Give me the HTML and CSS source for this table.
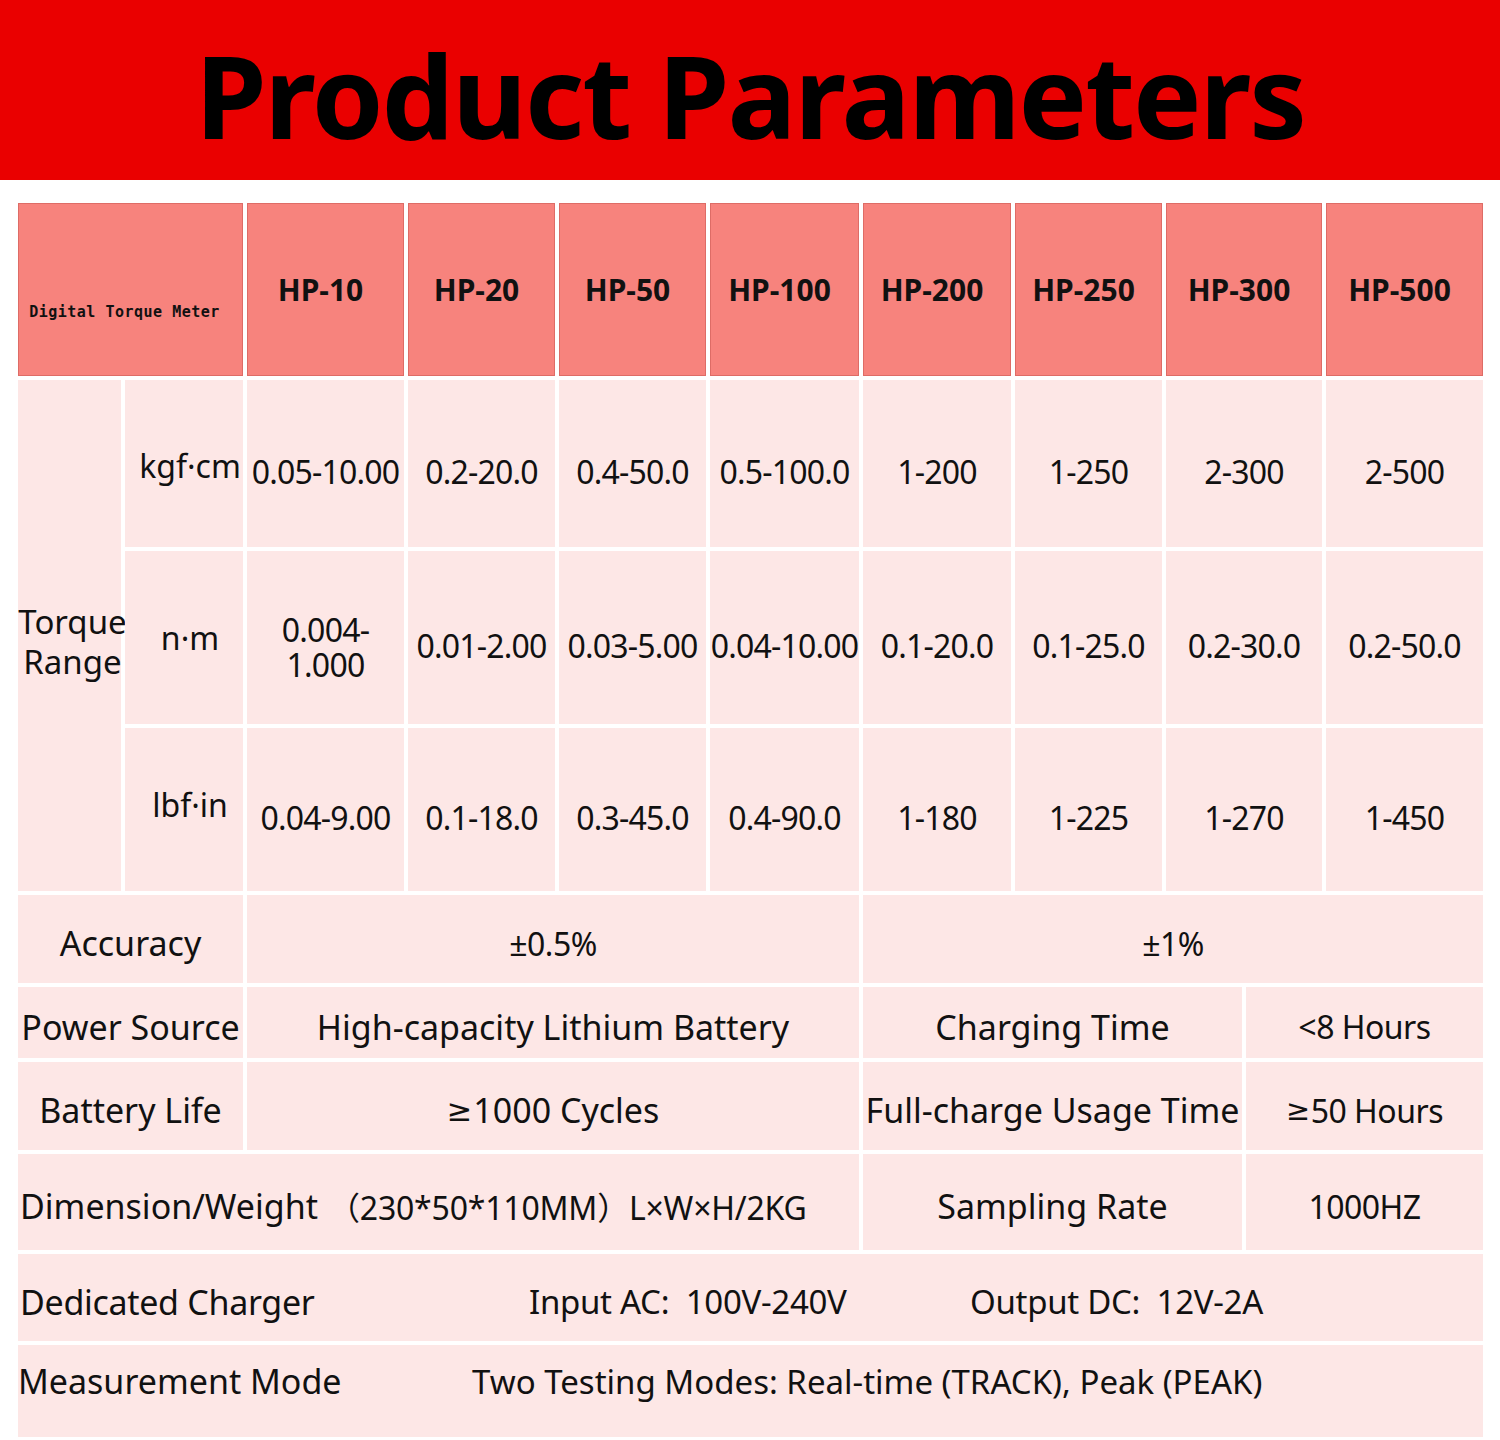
FILE: index.html
```html
<!DOCTYPE html>
<html lang="en">
<head>
<meta charset="utf-8">
<title>Product Parameters</title>
<link rel="stylesheet" href="styles.css">
</head>
<body>
<header class="banner"><h1 class="title">Product Parameters</h1></header>

<main class="sheet">
  <section class="models">
    <div class="cell head head-label"><span class="mono">Digital Torque Meter</span></div>
    <div class="cell head">HP-10</div>
    <div class="cell head">HP-20</div>
    <div class="cell head">HP-50</div>
    <div class="cell head">HP-100</div>
    <div class="cell head">HP-200</div>
    <div class="cell head">HP-250</div>
    <div class="cell head">HP-300</div>
    <div class="cell head">HP-500</div>

    <div class="cell label range"><span class="range-text">Torque<br>Range</span></div>
    <div class="cell unit unit-kgf">kgf·cm</div>
    <div class="cell num">0.05-10.00</div>
    <div class="cell num">0.2-20.0</div>
    <div class="cell num">0.4-50.0</div>
    <div class="cell num">0.5-100.0</div>
    <div class="cell num">1-200</div>
    <div class="cell num">1-250</div>
    <div class="cell num">2-300</div>
    <div class="cell num">2-500</div>

    <div class="cell unit">n·m</div>
    <div class="cell num two-line"><span class="stack">0.004-<br>1.000</span></div>
    <div class="cell num">0.01-2.00</div>
    <div class="cell num">0.03-5.00</div>
    <div class="cell num">0.04-10.00</div>
    <div class="cell num">0.1-20.0</div>
    <div class="cell num">0.1-25.0</div>
    <div class="cell num">0.2-30.0</div>
    <div class="cell num">0.2-50.0</div>

    <div class="cell unit unit-lbf">lbf·in</div>
    <div class="cell num">0.04-9.00</div>
    <div class="cell num">0.1-18.0</div>
    <div class="cell num">0.3-45.0</div>
    <div class="cell num">0.4-90.0</div>
    <div class="cell num">1-180</div>
    <div class="cell num">1-225</div>
    <div class="cell num">1-270</div>
    <div class="cell num">1-450</div>
  </section>

  <section class="row row-acc">
    <div class="cell label">Accuracy</div>
    <div class="cell val val-num">±0.5%</div>
    <div class="cell val val-num">±1%</div>
  </section>

  <section class="row row-four row-power">
    <div class="cell label">Power Source</div>
    <div class="cell val">High-capacity Lithium Battery</div>
    <div class="cell val">Charging Time</div>
    <div class="cell val val-short">&lt;8 Hours</div>
  </section>

  <section class="row row-four row-life">
    <div class="cell label">Battery Life</div>
    <div class="cell val"><span class="sym">≥</span>1000 Cycles</div>
    <div class="cell val">Full-charge Usage Time</div>
    <div class="cell val val-short"><span class="sym">≥</span>50 Hours</div>
  </section>

  <section class="row row-dim">
    <div class="cell wide dim">
      <span class="wide-label">Dimension/Weight</span>
      <span class="wide-val">（230*50*110MM）L×W×H/2KG</span>
    </div>
    <div class="cell val">Sampling Rate</div>
    <div class="cell val val-short">1000HZ</div>
  </section>

  <section class="row row-full row-charger">
    <div class="cell wide charger">
      <span class="wide-label">Dedicated Charger</span>
      <span>Input AC:&nbsp; 100V-240V</span>
      <span>Output DC:&nbsp; 12V-2A</span>
    </div>
  </section>

  <section class="row row-full row-mode">
    <div class="cell wide mode">
      <span class="wide-label">Measurement Mode</span>
      <span>Two Testing Modes: Real-time (TRACK), Peak (PEAK)</span>
    </div>
  </section>
</main>
</body>
</html>
```

FILE: styles.css
```css
* { box-sizing: border-box; }

html, body {
  margin: 0;
  padding: 0;
  background: #ffffff;
}

body {
  width: 1500px;
  font-family: "Noto Sans", "Noto Sans CJK SC", sans-serif;
  color: #111111;
}

.banner {
  height: 180px;
  background: #ea0000;
  display: flex;
  align-items: center;
  justify-content: center;
  padding-top: 8px;
}

.title {
  margin: 0;
  font-family: "Noto Sans", sans-serif;
  font-weight: 700;
  font-size: 115px;
  line-height: 1;
  letter-spacing: -2px;
  color: #000000;
}

.sheet {
  margin: 23px 0 0 18px;
  width: 1465px;
  display: flex;
  flex-direction: column;
  gap: 4px;
}

.models {
  display: grid;
  grid-template-columns: 103px 118px 157px 147px 147px 149px 148px 147px 156px 157px;
  grid-template-rows: 173px 167px 173px 163px;
  gap: 4px;
}

.cell {
  background: #fde7e6;
  display: flex;
  align-items: center;
  justify-content: center;
  text-align: center;
  white-space: nowrap;
  color: #111111;
}

.head {
  background: #f7837d;
  box-shadow: inset 0 0 0 1px rgba(190, 80, 75, 0.45);
  font-weight: 700;
  font-size: 30px;
  padding-right: 10px;
  color: #111111;
}

.head-label {
  grid-column: span 2;
  padding-top: 44px;
  padding-right: 12px;
}

.mono {
  font-family: "DejaVu Sans Mono", "Liberation Mono", monospace;
  font-weight: 700;
  font-size: 15px;
  letter-spacing: 0.5px;
}

.label {
  font-size: 34px;
}

.range {
  grid-row: span 3;
  padding-top: 12px;
  padding-left: 6px;
  font-size: 33px;
}

.range-text {
  display: block;
  line-height: 40px;
}

.unit {
  font-size: 32px;
  padding-left: 12px;
}

.unit-kgf { padding-top: 4px; }
.unit-lbf { padding-bottom: 10px; }

.num {
  font-size: 32px;
  letter-spacing: -0.8px;
  padding-top: 16px;
}

.two-line {
  padding-top: 18px;
}

.stack {
  display: block;
  line-height: 35px;
}

.row {
  display: grid;
  gap: 4px;
}

.row-acc {
  grid-template-columns: 225px 612px 620px;
  height: 88px;
}

.row-four {
  grid-template-columns: 225px 612px 379px 237px;
}

.row-power { height: 71px; }
.row-life { height: 88px; }

.row-dim {
  grid-template-columns: 841px 379px 237px;
  height: 96px;
}

.row-full {
  grid-template-columns: 1465px;
}

.row-charger { height: 87px; }
.row-mode { height: 92px; }

.row .label,
.row .val {
  padding-top: 8px;
}

.val {
  font-size: 34px;
}

.val-num {
  font-size: 32px;
  letter-spacing: -0.5px;
}

.val-short {
  font-size: 32px;
  letter-spacing: -0.5px;
}

.sym {
  font-family: "DejaVu Sans", sans-serif;
  font-size: 0.9em;
  margin-right: 1px;
}

.wide {
  justify-content: flex-start;
  text-align: left;
  font-size: 33px;
}

.wide-label {
  font-size: 34px;
}

.dim {
  display: grid;
  grid-template-columns: 324px auto;
  align-items: center;
  padding: 8px 0 0 2px;
}

.wide-val {
  margin-left: -16px;
  font-size: 32px;
  letter-spacing: -0.2px;
}

.charger {
  display: grid;
  grid-template-columns: 509px 441px auto;
  align-items: center;
  padding: 8px 0 0 2px;
  letter-spacing: -0.3px;
}

.mode {
  display: grid;
  grid-template-columns: 454px auto;
  align-items: center;
  padding: 0 0 20px 0;
}
```
